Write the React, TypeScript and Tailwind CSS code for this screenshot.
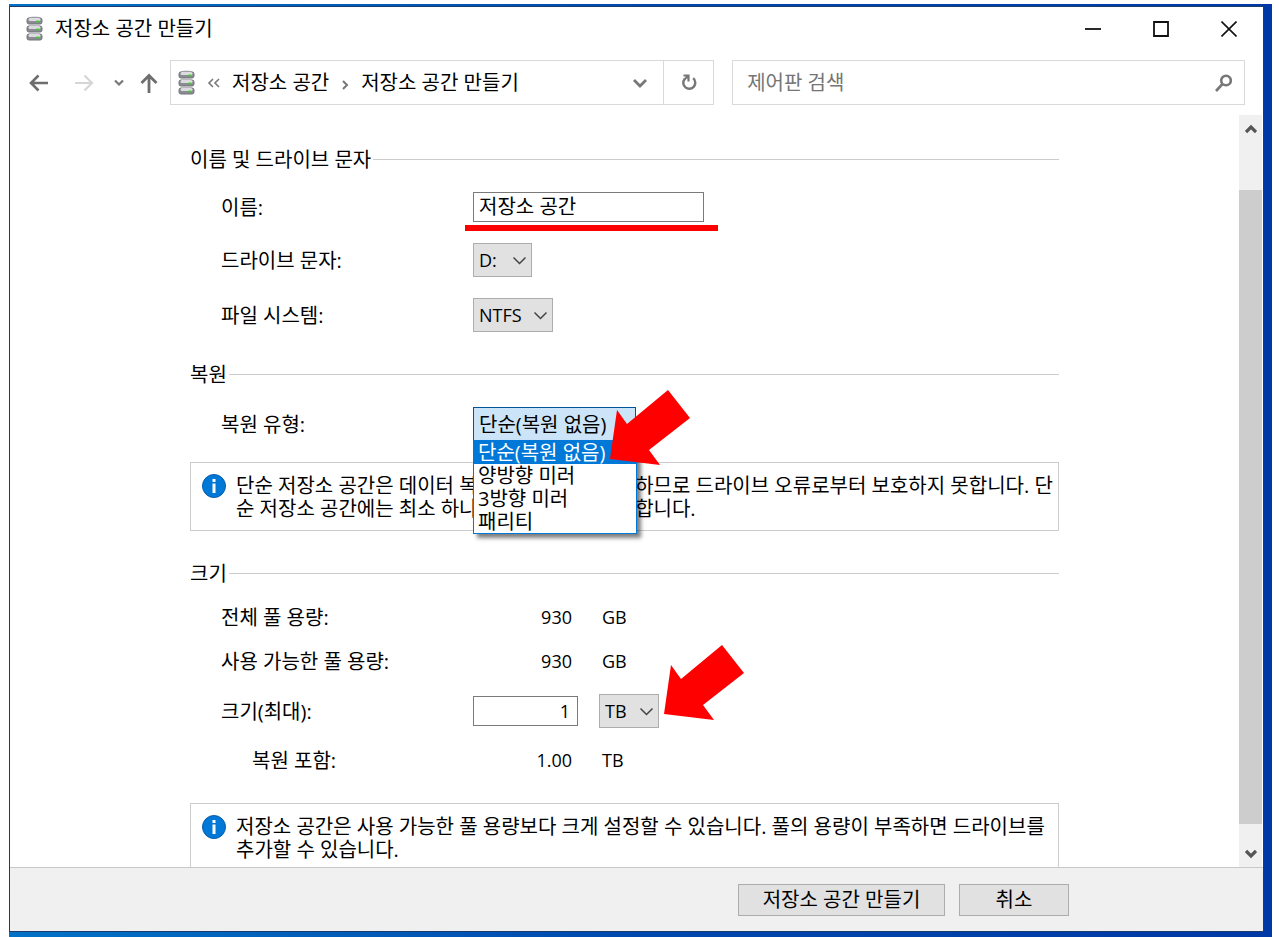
import type { ReactNode } from "react";
import { clsx } from "clsx";

const RESILIENCY = ["단순(복원 없음)", "양방향 미러", "3방향 미러", "패리티"];

export default function App() {
  return (
    <div className="h-screen bg-white pt-1 pr-[7px] pl-[9px] font-['Open_Sans','Noto_Sans_CJK_KR',sans-serif] text-[20px] leading-[23px] text-black">
      <div className="h-full bg-linear-to-r from-[#0072c6] via-[#0048ae] to-[#0039a6] pt-0.5 pr-2 pb-[5px]">
        <div className="flex h-full flex-col border border-[#1c3c6e] bg-white">
          <TitleBar />
          <NavBar />
          <div className="flex min-h-0 flex-1">
            <main className="min-w-0 flex-1 overflow-hidden pt-[33px] pr-[180px] pl-[180px]">
              <StorageForm />
            </main>
            <ScrollBar />
          </div>
          <footer className="flex h-16 shrink-0 items-center justify-end gap-3.5 border-t border-[#c8c8c8] bg-[#f0f0f0] pr-[194px]">
            <button className="h-8 w-[207px] border border-[#adadad] bg-[#e1e1e1]">저장소 공간 만들기</button>
            <button className="h-8 w-[110px] border border-[#adadad] bg-[#e1e1e1]">취소</button>
          </footer>
        </div>
      </div>
    </div>
  );
}

function TitleBar() {
  return (
    <header className="flex h-[43px] shrink-0 items-center">
      <DiskIcon className="ml-4" />
      <h1 className="ml-3 flex-1">저장소 공간 만들기</h1>
      <button aria-label="최소화" className="flex h-full w-[68px] items-center justify-center">
        <svg width="16" height="16" viewBox="0 0 16 16" fill="none" stroke="#111" strokeWidth="1.8">
          <path d="M0 8h16" />
        </svg>
      </button>
      <button aria-label="최대화" className="flex h-full w-[68px] items-center justify-center">
        <svg width="16" height="16" viewBox="0 0 16 16" fill="none" stroke="#111" strokeWidth="1.8">
          <path d="M1 1h14v14H1z" />
        </svg>
      </button>
      <button aria-label="닫기" className="flex h-full w-[68px] items-center justify-center">
        <svg width="16" height="16" viewBox="0 0 16 16" fill="none" stroke="#111" strokeWidth="1.6">
          <path d="M.5.5l15 15M15.5.5l-15 15" />
        </svg>
      </button>
    </header>
  );
}

function NavBar() {
  return (
    <nav className="my-2.5 grid h-[45px] shrink-0 grid-cols-[141px_minmax(0,41fr)_minmax(0,40fr)] items-center pr-[18px] pl-[19px]">
      <div className="flex items-center">
        <button aria-label="뒤로" className="mr-[25px]">
          <svg width="20" height="18" viewBox="0 0 20 18" fill="none" stroke="#6e6e6e" strokeWidth="2.6">
            <path d="M19 9H2M9.5 1.5L2 9l7.5 7.5" />
          </svg>
        </button>
        <button aria-label="앞으로" className="mr-5" disabled>
          <svg width="20" height="18" viewBox="0 0 20 18" fill="none" stroke="#d6d6d6" strokeWidth="2.2">
            <path d="M1 9h17M10.5 1.5L18 9l-7.5 7.5" />
          </svg>
        </button>
        <button aria-label="최근 위치" className="mr-4">
          <svg width="10" height="8" viewBox="0 0 10 8" fill="none" stroke="#777" strokeWidth="2.2">
            <path d="M1 1.5l4 4 4-4" />
          </svg>
        </button>
        <button aria-label="위로">
          <svg width="18" height="20" viewBox="0 0 18 20" fill="none" stroke="#6e6e6e" strokeWidth="2.8">
            <path d="M9 20V3M1.5 10L9 2.5l7.5 7.5" />
          </svg>
        </button>
      </div>
      <div className="flex h-full border border-[#d9d9d9]">
        <div className="flex min-w-0 flex-1 items-center pl-[7px] whitespace-nowrap">
          <DiskIcon />
          <svg className="ml-3" width="13" height="10" viewBox="0 0 13 10" fill="none" stroke="#777" strokeWidth="1.6">
            <path d="M6 1L2 5l4 4M12 1L8 5l4 4" />
          </svg>
          <a href="#spaces" className="ml-3">저장소 공간</a>
          <svg className="mx-3 mt-1" width="8" height="10" viewBox="0 0 8 10" fill="none" stroke="#777" strokeWidth="2">
            <path d="M2 1l4 4-4 4" />
          </svg>
          <a href="#create">저장소 공간 만들기</a>
        </div>
        <button aria-label="이전 위치" className="px-4">
          <svg width="14" height="10" viewBox="0 0 14 10" fill="none" stroke="#777" strokeWidth="2.8">
            <path d="M1 2l6 6 6-6" />
          </svg>
        </button>
        <button aria-label="새로 고침" className="flex w-[50px] items-center justify-center border-l border-[#d9d9d9]">
          <svg width="16" height="17" viewBox="0 0 16 17" fill="none" stroke="#777" strokeWidth="2.4">
            <path d="M12.2 4.2A6 6 0 1 1 3.600 5" />
            <path d="M2.500 1.500h5v6M7 2L3.200 5.800" strokeWidth="2.200" />
          </svg>
        </button>
      </div>
      <label className="ml-[18px] flex h-full items-center border border-[#d9d9d9] pr-3 pl-3.5">
        <input
          type="search"
          aria-label="제어판 검색"
          placeholder="제어판 검색"
          className="min-w-0 flex-1 outline-none placeholder:text-[#757575]"
        />
        <svg width="17" height="18" viewBox="0 0 17 18" fill="none" stroke="#777" strokeWidth="2.6">
          <circle cx="11" cy="6.5" r="4.8" />
          <path d="M7.5 10L1 17" />
        </svg>
      </label>
    </nav>
  );
}

function ScrollBar() {
  return (
    <div className="mr-px flex w-[23px] shrink-0 flex-col bg-[#f0f0f0]">
      <button aria-label="위로 스크롤" className="flex h-[27px] items-center justify-center">
        <svg width="12" height="10" viewBox="0 0 12 10" fill="none" stroke="#555" strokeWidth="3.2">
          <path d="M1 8l5-5 5 5" />
        </svg>
      </button>
      <div className="flex-1 pt-12 pb-4">
        <div className="h-full bg-[#cdcdcd]" />
      </div>
      <button aria-label="아래로 스크롤" className="flex h-[27px] items-center justify-center">
        <svg width="12" height="10" viewBox="0 0 12 10" fill="none" stroke="#555" strokeWidth="3.2">
          <path d="M1 2l5 5 5-5" />
        </svg>
      </button>
    </div>
  );
}

function StorageForm() {
  return (
    <form className="flex flex-col gap-[31px]">
      <Section title="이름 및 드라이브 문자">
        <Row label="이름:" htmlFor="name">
          <div className="relative">
            <input
              id="name"
              defaultValue="저장소 공간"
              className="block h-[30px] w-[231px] border border-[#7a7a7a] px-[5px] pb-1 outline-none"
            />
            <div className="absolute top-[33px] -left-2 h-1.5 w-[253px] bg-[#ff0000]" />
          </div>
        </Row>
        <Row label="드라이브 문자:" htmlFor="letter">
          <Dropdown id="letter" value="D:" className="w-[59px]" />
        </Row>
        <Row label="파일 시스템:" htmlFor="fs">
          <Dropdown id="fs" value="NTFS" className="w-20" />
        </Row>
      </Section>

      <Section title="복원">
        <Row label="복원 유형:" htmlFor="resiliency">
          <div className="relative z-10">
            <select
              id="resiliency"
              className="block h-[34px] w-[163px] appearance-none border border-[#005499] bg-[#cce4f7] pl-[5px] outline-none"
            >
              {RESILIENCY.map((r) => (
                <option key={r}>{r}</option>
              ))}
            </select>
            <ul
              role="listbox"
              aria-label="복원 유형"
              className="absolute top-[33px] left-0 w-[164px] border border-[#0078d7] bg-white shadow-[4px_4px_4px_rgba(0,0,0,0.5)]"
            >
              {RESILIENCY.map((r, i) => (
                <li
                  key={r}
                  role="option"
                  aria-selected={i === 0}
                  className={clsx("pl-1 whitespace-nowrap", i === 0 && "bg-[#0078d7] text-white")}
                >
                  {r}
                </li>
              ))}
            </ul>
            <RedArrow className="absolute -top-[17px] left-[137px]" />
          </div>
        </Row>
        <InfoBox>
          단순 저장소 공간은 데이터 복사본을 하나만 작성하므로 드라이브 오류로부터 보호하지 못합니다. 단순 저장소 공간에는 최소 하나의
          드라이브가 필요합니다.
        </InfoBox>
      </Section>

      <Section title="크기">
        <Row label="전체 풀 용량:">
          <Amount value="930" unit="GB" />
        </Row>
        <Row label="사용 가능한 풀 용량:">
          <Amount value="930" unit="GB" />
        </Row>
        <Row label="크기(최대):" htmlFor="size">
          <input
            id="size"
            defaultValue="1"
            className="h-[30px] w-[105px] border border-[#7a7a7a] px-[7px] text-right text-[18px] outline-none"
          />
          <div className="relative ml-[21px]">
            <Dropdown id="unit" value="TB" label="크기 단위" className="w-[60px]" />
            <RedArrow className="absolute -top-[49px] left-[65px]" />
          </div>
        </Row>
        <Row label="복원 포함:" nested>
          <Amount value="1.00" unit="TB" />
        </Row>
      </Section>

      <InfoBox>
        저장소 공간은 사용 가능한 풀 용량보다 크게 설정할 수 있습니다. 풀의 용량이 부족하면 드라이브를 추가할 수 있습니다.
      </InfoBox>
    </form>
  );
}

function Section({ title, children }: { title: string; children: ReactNode }) {
  return (
    <section className="flex flex-col gap-[21px]">
      <div className="flex items-center gap-0.5">
        <h2>{title}</h2>
        <div className="h-px flex-1 bg-[#cccccc]" />
      </div>
      {children}
    </section>
  );
}

function Row({
  label,
  htmlFor,
  nested,
  children,
}: {
  label: string;
  htmlFor?: string;
  nested?: boolean;
  children: ReactNode;
}) {
  return (
    <div className="flex items-center pl-[31px]">
      <label htmlFor={htmlFor} className={clsx("w-[252px] shrink-0", nested && "pl-[31px]")}>
        {label}
      </label>
      {children}
    </div>
  );
}

function Amount({ value, unit }: { value: string; unit: string }) {
  return (
    <div className="flex text-[18px]">
      <span className="w-[105px] pr-1.5 text-right">{value}</span>
      <span className="pl-6">{unit}</span>
    </div>
  );
}

function Dropdown({ id, value, label, className }: { id: string; value: string; label?: string; className: string }) {
  return (
    <div className={clsx("relative", className)}>
      <select
        id={id}
        aria-label={label}
        className="block h-[34px] w-full appearance-none border border-[#adadad] bg-[#e1e1e1] pl-[5px] text-[18px] outline-none"
      >
        <option>{value}</option>
      </select>
      <svg
        className="pointer-events-none absolute top-[13px] right-1.5"
        width="13"
        height="9"
        viewBox="0 0 13 9"
        fill="none"
        stroke="#444"
        strokeWidth="1.5"
      >
        <path d="M.5 1.5l6 6 6-6" />
      </svg>
    </div>
  );
}

function InfoBox({ children }: { children: ReactNode }) {
  return (
    <div className="flex gap-2.5 border border-[#cccccc] pt-[11px] pr-px pb-2.5 pl-[11px]">
      <svg className="shrink-0" width="24" height="24" viewBox="0 0 24 24">
        <circle cx="12" cy="12" r="11.5" fill="#0078d7" stroke="#0a5ba8" />
        <rect x="10.5" y="5" width="3" height="3" fill="#fff" />
        <rect x="10.5" y="9.5" width="3" height="9.5" fill="#fff" />
      </svg>
      <p className="break-all">{children}</p>
    </div>
  );
}

function RedArrow({ className }: { className: string }) {
  return (
    <svg className={clsx("pointer-events-none z-20", className)} width="80" height="76" viewBox="0 0 80 76">
      <polygon points="58,0 80,28 39,60 50,75 0,69 7,20 17,34" fill="#ff0000" />
    </svg>
  );
}

// stack of three drives with a green light on each
function DiskIcon({ className }: { className?: string }) {
  return (
    <svg className={clsx("shrink-0", className)} width="17" height="25" viewBox="0 0 17 25">
      <path d="M1 4C1 1.5 4 .5 8.5 .5S16 1.5 16 4z" fill="#c9c9cd" />
      {[2, 10, 18].map((y) => (
        <g key={y}>
          <rect x="1" y={y} width="15" height="6" rx="2" fill="#8b8b93" stroke="#73737c" />
          <rect x="2.5" y={y} width="12" height="3" rx="1.5" fill="#dcdce0" />
          <rect x="10.5" y={y + 2.5} width="2.5" height="1.8" fill="#3fd02a" />
        </g>
      ))}
    </svg>
  );
}
